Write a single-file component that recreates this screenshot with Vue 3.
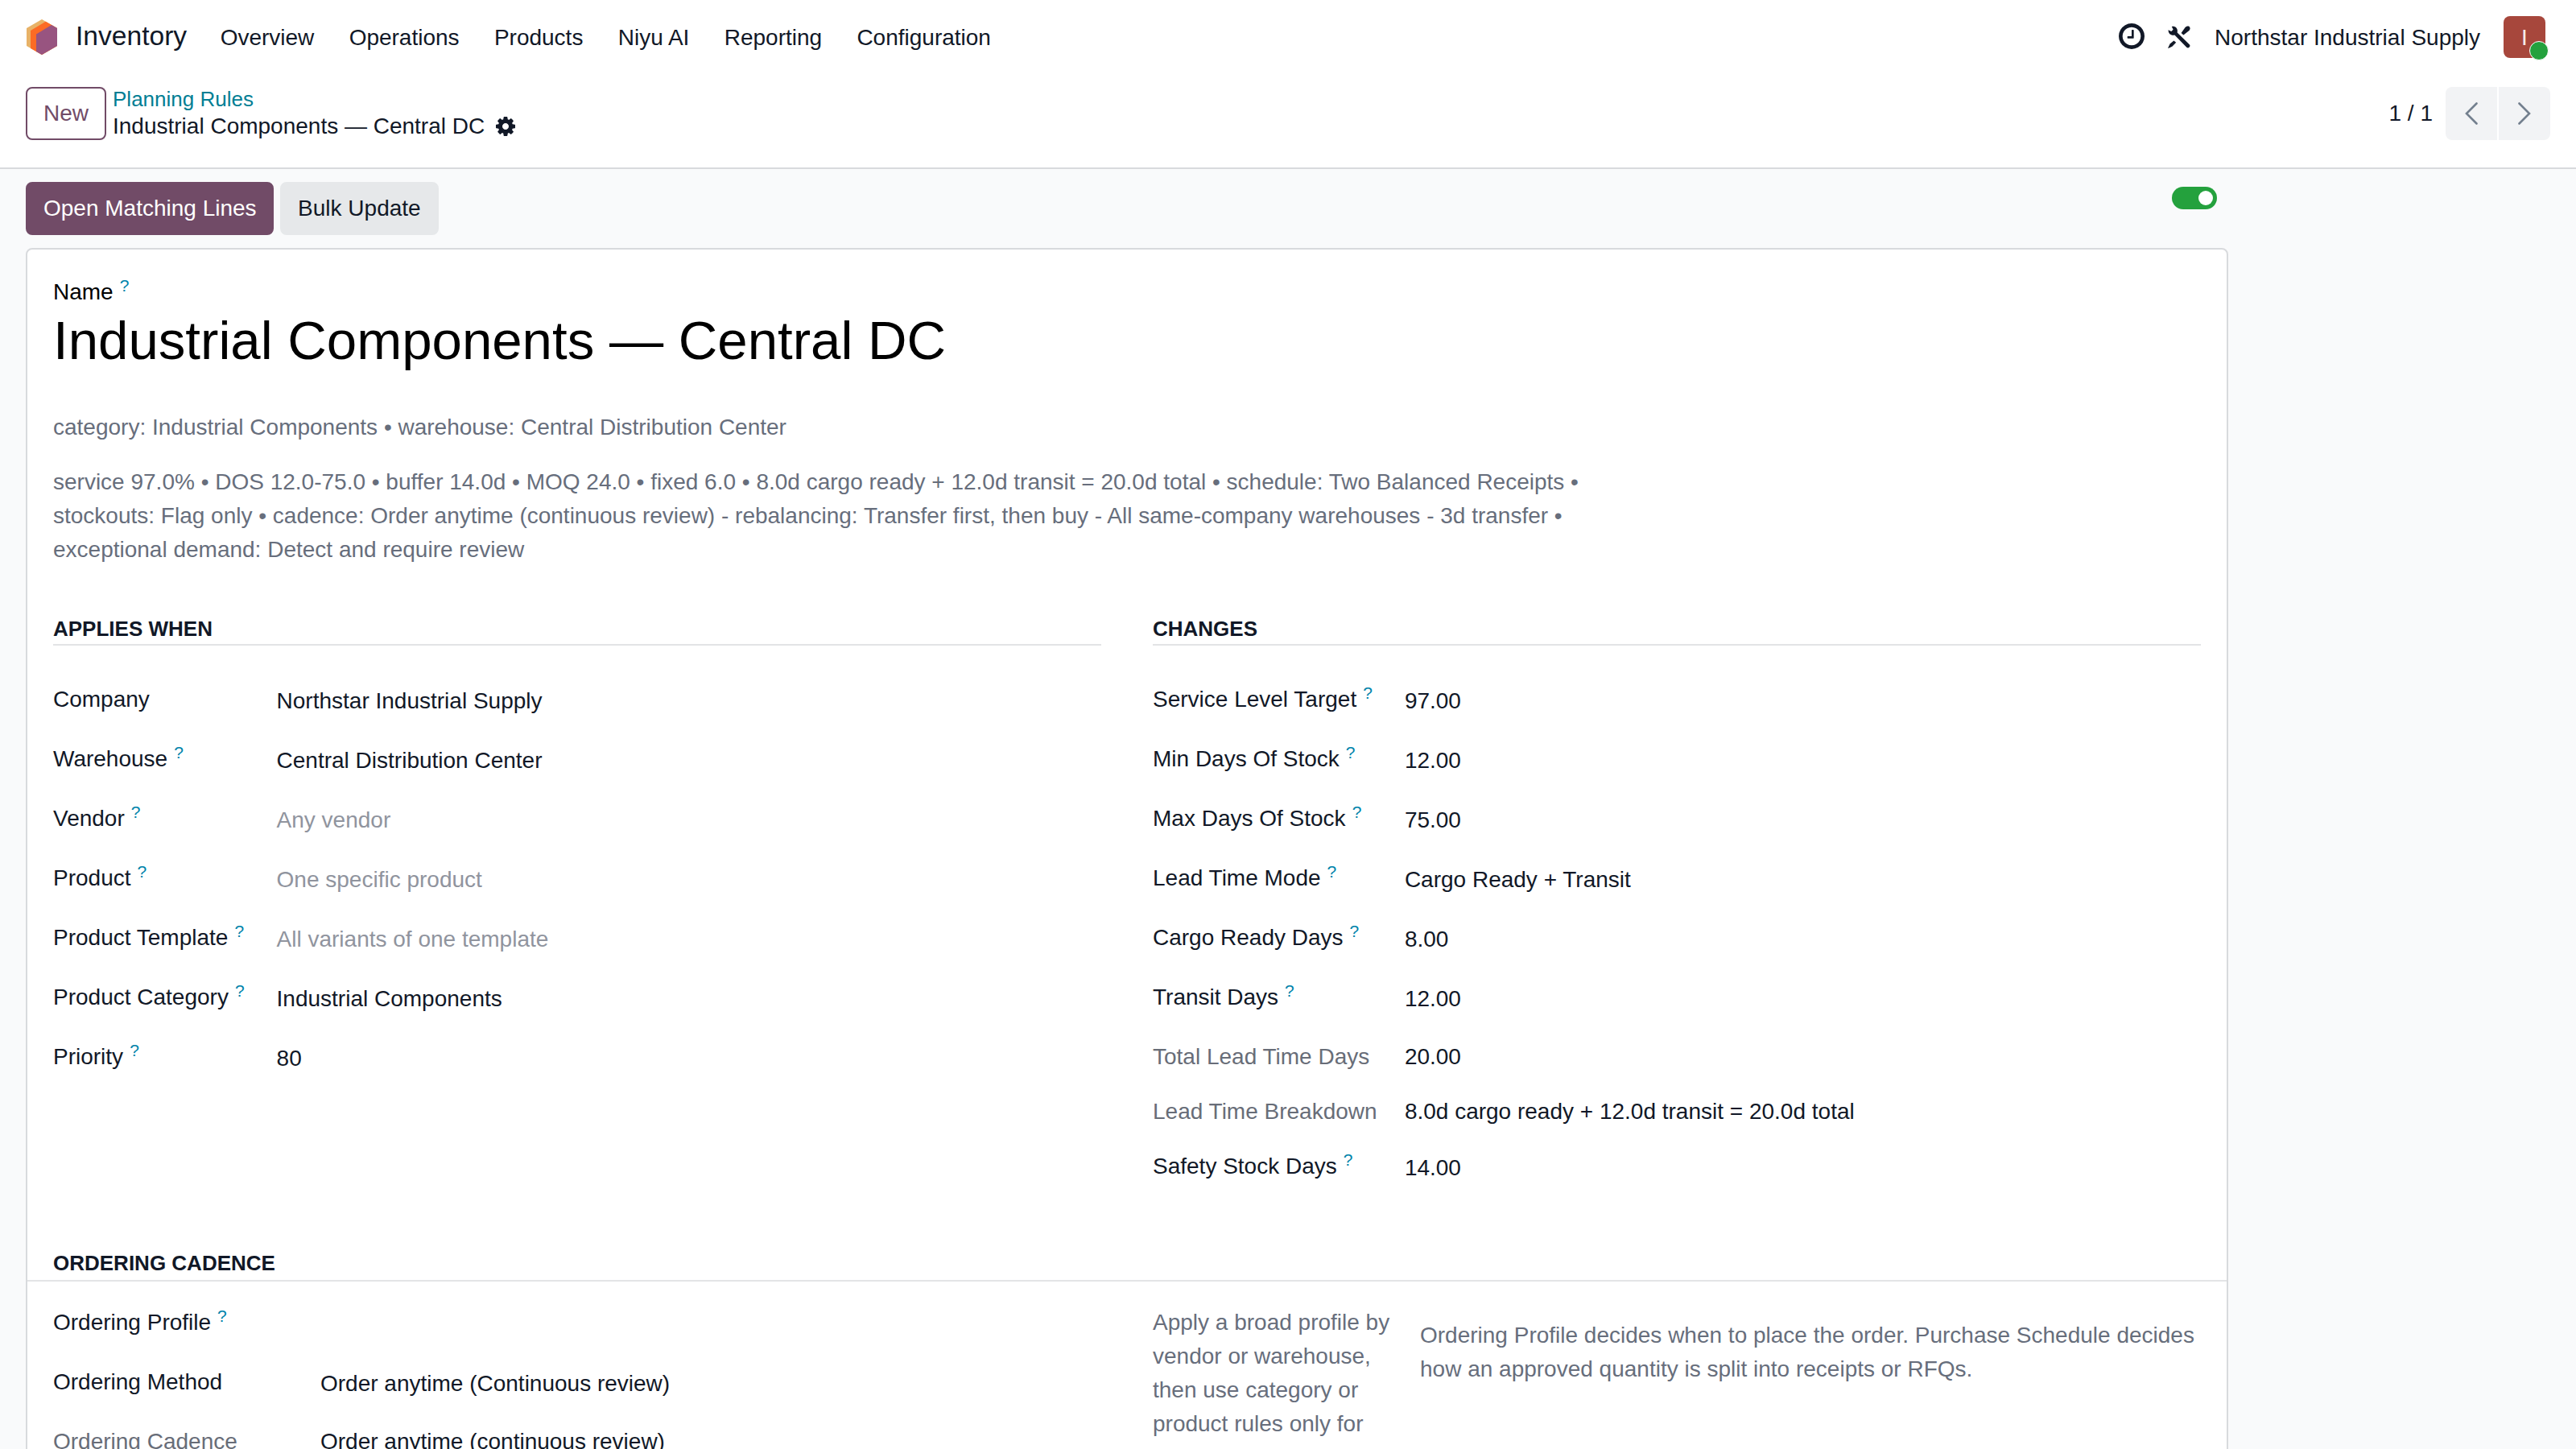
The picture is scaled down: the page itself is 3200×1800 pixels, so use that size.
<template>
    <div class="web-client">
        <header class="navbar">
            <svg class="app-logo" viewBox="0 0 38 44">
                <path fill="#e8b267" d="M19 0 L38 11 V33 L19 44 L0 33 V11 Z" />
                <path fill="#fc6b25" d="M23.8 2.8 L38 11 V33 L19 44 L5 35.9 V14 Z" />
                <path fill="#985480" d="M31 7 L38 11 V33 L19 44 L12 39.9 V18.5 Z" />
            </svg>
            <span class="app-name">Inventory</span>
            <nav class="menu">
                <a v-for="item in menuItems" :key="item">{{ item }}</a>
            </nav>
            <div class="systray">
                <svg class="icon-clock" viewBox="128 128 1536 1536">
                    <path d="M1024 544v448q0 14-9 23t-23 9h-320q-14 0-23-9t-9-23v-64q0-14 9-23t23-9h224v-352q0-14 9-23t23-9h64q14 0 23 9t9 23zm416 352q0-148-73-273t-198-198-273-73-273 73-198 198-73 273 73 273 198 198 273 73 273-73 198-198 73-273zm224 0q0 209-103 385.500t-279.500 279.500-385.500 103-385.500-103-279.500-279.500-103-385.500 103-385.500 279.500-279.500 385.500-103 385.500 103 279.500 279.500 103 385.500z" />
                </svg>
                <svg class="icon-tools" viewBox="0 0 28 28">
                    <path d="M0.6 5.2 L4.3 7 L6.6 4.8 L4.8 1 C8 -0.3 11.8 2.2 11.9 6 L11.7 8.4 L27 23.4 C28.6 25.6 25.8 28.6 23.5 27 L8.4 11.5 C4.6 12.8 0.2 10.2 0.6 5.2 Z" />
                    <path d="M16.6 9 L21.2 2.4 C22.8 0.6 25 0.2 26.6 0.9 C28.2 2.6 27.6 5 25.8 6.6 L19.4 11.4 Z" />
                    <path d="M7.4 18.4 L10.2 20.8 L5.4 25.8 L0.6 28 L0.2 27.4 L2.6 22.6 Z" />
                </svg>
                <span class="company">Northstar Industrial Supply</span>
                <div class="avatar">I<span class="presence"></span></div>
            </div>
        </header>

        <div class="control-panel">
            <button class="btn btn-outline">New</button>
            <div class="breadcrumb">
                <a class="crumb-link">Planning Rules</a>
                <div class="crumb-active">
                    <span>Industrial Components — Central DC</span>
                    <svg class="icon-cog" viewBox="128 128 1536 1536">
                        <path d="M1152 896q0-106-75-181t-181-75-181 75-75 181 75 181 181 75 181-75 75-181zm512-109v222q0 12-8 23t-20 13l-185 28q-19 54-39 91 35 50 107 138 10 12 10 25t-9 23q-27 37-99 108t-94 71q-12 0-26-9l-138-108q-44 23-91 38-16 136-29 186-7 28-36 28h-222q-14 0-24.500-8.500t-11.500-21.500l-28-184q-49-16-90-37l-141 107q-10 9-25 9-14 0-25-11-126-114-165-168-7-10-7-23 0-12 8-23 15-21 51-66.500t54-70.500q-27-50-41-99l-183-27q-13-2-21-12.500t-8-23.500v-222q0-12 8-23t19-13l186-28q14-46 39-92-40-57-107-138-10-12-10-24 0-10 9-23 26-36 98.500-107.500t94.500-71.500q13 0 26 10l138 107q44-23 91-38 16-136 29-186 7-28 36-28h222q14 0 24.500 8.500t11.500 21.500l28 184q49 16 90 37l142-107q9-9 24-9 13 0 25 10 129 119 165 170 7 8 7 22 0 12-8 23-15 21-51 66.500t-54 70.500q26 50 41 98l183 28q13 2 21 12.500t8 23.500z" />
                    </svg>
                </div>
            </div>
            <div class="pager">
                <span class="pager-count">1 / 1</span>
                <button class="pager-btn prev">
                    <svg viewBox="0 0 16 28"><path d="M14.500 1.500 L2 14 L14.500 26.500" /></svg>
                </button>
                <button class="pager-btn next">
                    <svg viewBox="0 0 16 28"><path d="M1.500 1.500 L14 14 L1.500 26.500" /></svg>
                </button>
            </div>
        </div>

        <main class="form-view">
            <div class="statusbar">
                <button class="btn btn-primary">Open Matching Lines</button>
                <button class="btn btn-secondary">Bulk Update</button>
                <div class="toggle"><span class="knob"></span></div>
            </div>

            <div class="sheet">
                <div class="label name-label">Name<sup>?</sup></div>
                <h1>Industrial Components — Central DC</h1>
                <p class="muted scope">category: Industrial Components • warehouse: Central Distribution Center</p>
                <p class="muted summary">{{ summary }}</p>

                <div class="groups">
                    <section class="group">
                        <h2>Applies When</h2>
                        <div class="fields">
                            <template v-for="f in appliesWhen" :key="f.label">
                                <div class="label">{{ f.label }}<sup v-if="f.help">?</sup></div>
                                <div class="value" :class="{ placeholder: f.placeholder }">{{ f.value || f.placeholder }}</div>
                            </template>
                        </div>
                    </section>
                    <section class="group">
                        <h2>Changes</h2>
                        <div class="fields">
                            <template v-for="f in changes" :key="f.label">
                                <div class="label" :class="{ readonly: f.readonly }">{{ f.label }}<sup v-if="f.help">?</sup></div>
                                <div class="value" :class="{ readonly: f.readonly }">{{ f.value }}</div>
                            </template>
                        </div>
                    </section>
                </div>

                <h2 class="wide-title">Ordering Cadence</h2>
                <div class="groups cadence">
                    <div class="fields">
                        <template v-for="f in cadence" :key="f.label">
                            <div class="label" :class="{ readonly: f.readonly }">{{ f.label }}<sup v-if="f.help">?</sup></div>
                            <div class="value" :class="{ readonly: f.readonly }">{{ f.value }}</div>
                        </template>
                    </div>
                    <div class="fields">
                        <div class="muted hint">Apply a broad profile by vendor or warehouse, then use category or product rules only for exceptions.</div>
                        <div class="muted note">Ordering Profile decides when to place the order. Purchase Schedule decides how an approved quantity is split into receipts or RFQs.</div>
                    </div>
                </div>
            </div>
        </main>
    </div>
</template>

<script setup>
const menuItems = ['Overview', 'Operations', 'Products', 'Niyu AI', 'Reporting', 'Configuration']

const summary = 'service 97.0% • DOS 12.0-75.0 • buffer 14.0d • MOQ 24.0 • fixed 6.0 • 8.0d cargo ready + 12.0d transit = 20.0d total • schedule: Two Balanced Receipts • stockouts: Flag only • cadence: Order anytime (continuous review) - rebalancing: Transfer first, then buy - All same-company warehouses - 3d transfer • exceptional demand: Detect and require review'

const appliesWhen = [
    { label: 'Company', value: 'Northstar Industrial Supply' },
    { label: 'Warehouse', help: true, value: 'Central Distribution Center' },
    { label: 'Vendor', help: true, placeholder: 'Any vendor' },
    { label: 'Product', help: true, placeholder: 'One specific product' },
    { label: 'Product Template', help: true, placeholder: 'All variants of one template' },
    { label: 'Product Category', help: true, value: 'Industrial Components' },
    { label: 'Priority', help: true, value: '80' },
]

const changes = [
    { label: 'Service Level Target', help: true, value: '97.00' },
    { label: 'Min Days Of Stock', help: true, value: '12.00' },
    { label: 'Max Days Of Stock', help: true, value: '75.00' },
    { label: 'Lead Time Mode', help: true, value: 'Cargo Ready + Transit' },
    { label: 'Cargo Ready Days', help: true, value: '8.00' },
    { label: 'Transit Days', help: true, value: '12.00' },
    { label: 'Total Lead Time Days', readonly: true, value: '20.00' },
    { label: 'Lead Time Breakdown', readonly: true, value: '8.0d cargo ready + 12.0d transit = 20.0d total' },
    { label: 'Safety Stock Days', help: true, value: '14.00' },
]

const cadence = [
    { label: 'Ordering Profile', help: true, value: '' },
    { label: 'Ordering Method', value: 'Order anytime (Continuous review)' },
    { label: 'Ordering Cadence', readonly: true, value: 'Order anytime (continuous review)' },
]
</script>

<style>
html,
body {
    margin: 0;
    overflow: hidden;
}
</style>

<style scoped>
.web-client {
    width: 3200px;
    height: 1800px;
    overflow: hidden;
    display: flex;
    flex-direction: column;
    background: #f9fafb;
    color: #111827;
    font-family: "Liberation Sans", Arial, sans-serif;
    font-size: 28px;
    line-height: 42px;
}
button {
    font: inherit;
    color: inherit;
    margin: 0;
}
h1,
h2,
p {
    margin: 0;
    font-weight: normal;
}

/* top bar */
.navbar {
    flex: none;
    display: flex;
    align-items: center;
    height: 92px;
    padding: 0 38px 0 33px;
    box-sizing: border-box;
    background: #fff;
}
.app-logo {
    width: 38px;
    height: 44px;
}
.app-name {
    margin: -3px 0 0 23px;
    font-size: 33.6px;
}
.menu {
    display: flex;
    gap: 43.3px;
    margin: 2px 0 0 41.5px;
}
.systray {
    display: flex;
    align-items: center;
    margin-left: auto;
}
.icon-clock {
    width: 32px;
    height: 32px;
    margin: -2px 29px 0 0;
    fill: #111827;
}
.icon-tools {
    width: 28px;
    height: 28px;
    margin-right: 30px;
    fill: #111827;
}
.company {
    margin-top: 2px;
}
.avatar {
    position: relative;
    width: 52px;
    height: 52px;
    margin-left: 29px;
    border-radius: 8px;
    background: #a7473c;
    color: #f6eceb;
    line-height: 53px;
    text-align: center;
}
.presence {
    position: absolute;
    right: -4px;
    bottom: -3px;
    width: 22px;
    height: 22px;
    border: 1px solid #fff;
    border-radius: 50%;
    background: #24a13d;
}

/* breadcrumb and pager */
.control-panel {
    flex: none;
    display: flex;
    align-items: flex-start;
    height: 118px;
    padding: 16px 32px 0;
    box-sizing: border-box;
    background: #fff;
    border-bottom: 2px solid #d8dadd;
}
.btn {
    height: 66px;
    padding: 0 20px;
    border: 2px solid transparent;
    border-radius: 8px;
    white-space: nowrap;
}
.btn-outline {
    background: #fff;
    border-color: #714b67;
    color: #714b67;
}
.btn-primary {
    padding: 0 19.5px 0 20px;
    background: #714b67;
    border-color: #714b67;
    color: #fff;
}
.btn-secondary {
    padding: 0 20.500px;
    background: #e6e8ea;
    border-color: #e6e8ea;
    margin-left: 7.5px;
}
.breadcrumb {
    display: flex;
    flex-direction: column;
    margin-left: 8px;
}
.crumb-link {
    font-size: 26px;
    line-height: 30px;
    color: #017e94;
}
.crumb-active {
    display: flex;
    align-items: center;
    line-height: 38px;
}
.icon-cog {
    width: 24px;
    height: 24px;
    margin: -1px 0 0 14px;
    fill: #111827;
}
.pager {
    display: flex;
    align-items: center;
    margin-left: auto;
}
.pager-count {
    margin-right: 16px;
}
.pager-btn {
    display: flex;
    align-items: center;
    justify-content: center;
    width: 64px;
    height: 66px;
    padding: 0;
    border: 0;
    background: #f2f3f5;
}
.pager-btn svg {
    width: 16px;
    height: 28px;
    fill: none;
    stroke: #737f8e;
    stroke-width: 2.6;
    stroke-linecap: round;
}
.prev {
    border-radius: 8px 0 0 8px;
}
.next {
    margin-left: 2px;
    border-radius: 0 8px 8px 0;
}

/* form */
.form-view {
    width: 2736px;
    padding: 16px 32px 0;
}
.statusbar {
    display: flex;
    align-items: flex-start;
}
.toggle {
    display: flex;
    align-items: center;
    justify-content: flex-end;
    width: 56px;
    height: 28px;
    margin: 6px 14px 0 auto;
    padding-right: 5px;
    box-sizing: border-box;
    border-radius: 14px;
    background: #24a13d;
}
.knob {
    width: 18px;
    height: 18px;
    border-radius: 50%;
    background: #fff;
}
.sheet {
    height: 1700px;
    margin-top: 16px;
    padding: 32px 32px 0;
    box-sizing: border-box;
    background: #fff;
    border: 2px solid #d8dadd;
    border-radius: 8px;
}
.label sup {
    position: relative;
    top: -0.5em;
    padding: 0 8px;
    font-size: 21px;
    line-height: 0;
    vertical-align: baseline;
    color: #0184ab;
}
.name-label {
    color: #000;
}
h1 {
    font-size: 67.2px;
    line-height: 78px;
    color: #000;
}
.muted {
    color: #676e7c;
}
.scope {
    margin-top: 48px;
}
.summary {
    width: 1900px;
    margin-top: 26px;
}
.groups {
    display: grid;
    grid-template-columns: 1302px 1302px;
    gap: 64px;
    margin-top: 58px;
}
h2 {
    font-size: 26px;
    font-weight: bold;
    line-height: 38px;
    text-transform: uppercase;
    border-bottom: 2px solid #e3e4e6;
}
.group .fields {
    margin-top: 46px;
}
.fields {
    display: grid;
    grid-template-columns: max-content 1fr;
    column-gap: 32px;
    align-content: start;
}
.label {
    white-space: nowrap;
}
.value {
    height: 72px;
    padding-top: 2px;
}
.value.readonly {
    height: 68px;
    padding-top: 0;
}
.label.readonly {
    color: #686d78;
}
.placeholder {
    color: #90949e;
}
.wide-title {
    margin: 48px -32px 0;
    padding: 0 32px 2px;
}
.cadence {
    margin-top: 30px;
}
.cadence .fields {
    grid-template-columns: 300px 1fr;
}
.note {
    margin-top: 16px;
}
</style>
